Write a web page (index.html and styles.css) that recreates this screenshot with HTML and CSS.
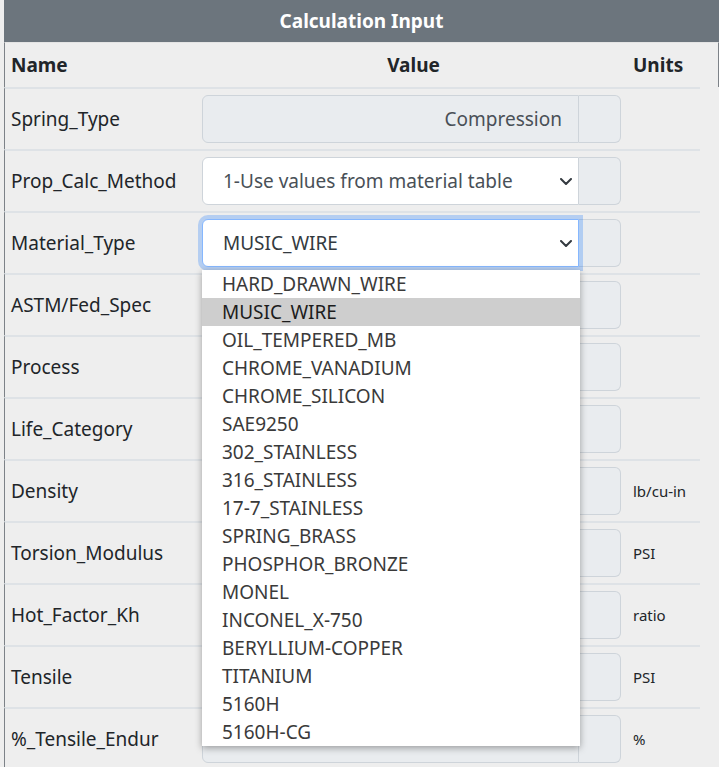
FILE: index.html
```html
<!DOCTYPE html>
<html lang="en">
<head>
<meta charset="utf-8">
<title>Calculation Input</title>
<link rel="stylesheet" href="styles.css">
</head>
<body>
<div class="panel">
  <div class="title">Calculation Input</div>
  <div class="thead">
    <div class="c-name">Name</div>
    <div class="c-value">Value</div>
    <div class="c-units">Units</div>
  </div>

  <div class="row">
    <div class="c-name">Spring_Type</div>
    <div class="ig"><div class="ctl ro">Compression</div><div class="addon"></div></div>
    <div class="c-units"></div>
  </div>
  <div class="row">
    <div class="c-name">Prop_Calc_Method</div>
    <div class="ig"><div class="ctl sel"><span>1-Use values from material table</span><svg class="chev" width="12" height="7" viewBox="0 0 12 7"><path d="M1 1 L6 6 L11 1" fill="none" stroke="#343a40" stroke-width="2" stroke-linecap="round" stroke-linejoin="round"/></svg></div><div class="addon"></div></div>
    <div class="c-units"></div>
  </div>
  <div class="row">
    <div class="c-name">Material_Type</div>
    <div class="ig"><div class="ctl sel focus"><span class="dark">MUSIC_WIRE</span><svg class="chev" width="12" height="7" viewBox="0 0 12 7"><path d="M1 1 L6 6 L11 1" fill="none" stroke="#343a40" stroke-width="2" stroke-linecap="round" stroke-linejoin="round"/></svg></div><div class="addon"></div></div>
    <div class="c-units"></div>
  </div>
  <div class="row">
    <div class="c-name">ASTM/Fed_Spec</div>
    <div class="ig"><div class="ctl ro">A228</div><div class="addon"></div></div>
    <div class="c-units"></div>
  </div>
  <div class="row">
    <div class="c-name">Process</div>
    <div class="ig"><div class="ctl ro">Cold_Coiled</div><div class="addon"></div></div>
    <div class="c-units"></div>
  </div>
  <div class="row">
    <div class="c-name">Life_Category</div>
    <div class="ig"><div class="ctl ro">Not Peened</div><div class="addon"></div></div>
    <div class="c-units"></div>
  </div>
  <div class="row">
    <div class="c-name">Density</div>
    <div class="ig"><div class="ctl ro">0.2840</div><div class="addon"></div></div>
    <div class="c-units">lb/cu-in</div>
  </div>
  <div class="row">
    <div class="c-name">Torsion_Modulus</div>
    <div class="ig"><div class="ctl ro">11500000</div><div class="addon"></div></div>
    <div class="c-units">PSI</div>
  </div>
  <div class="row">
    <div class="c-name">Hot_Factor_Kh</div>
    <div class="ig"><div class="ctl ro">1.0000</div><div class="addon"></div></div>
    <div class="c-units">ratio</div>
  </div>
  <div class="row">
    <div class="c-name">Tensile</div>
    <div class="ig"><div class="ctl ro">250000</div><div class="addon"></div></div>
    <div class="c-units">PSI</div>
  </div>
  <div class="row">
    <div class="c-name">%_Tensile_Endur</div>
    <div class="ig"><div class="ctl ro">50.00</div><div class="addon"></div></div>
    <div class="c-units">%</div>
  </div>

  <ul class="popup">
    <li>HARD_DRAWN_WIRE</li>
    <li class="on">MUSIC_WIRE</li>
    <li>OIL_TEMPERED_MB</li>
    <li>CHROME_VANADIUM</li>
    <li>CHROME_SILICON</li>
    <li>SAE9250</li>
    <li>302_STAINLESS</li>
    <li>316_STAINLESS</li>
    <li>17-7_STAINLESS</li>
    <li>SPRING_BRASS</li>
    <li>PHOSPHOR_BRONZE</li>
    <li>MONEL</li>
    <li>INCONEL_X-750</li>
    <li>BERYLLIUM-COPPER</li>
    <li>TITANIUM</li>
    <li>5160H</li>
    <li>5160H-CG</li>
  </ul>
</div>
</body>
</html>
```
FILE: styles.css
```css
html, body {
  margin: 0;
  padding: 0;
  height: 100%;
  overflow: hidden;
  background: #eeeeee;
}
body {
  font-family: "Noto Sans", "Open Sans", sans-serif;
  color: #212529;
}
.panel {
  position: relative;
  margin-left: 4px;
  width: 715px;
}
.title {
  height: 42px;
  background: #6c757d;
  color: #ffffff;
  font-weight: 700;
  font-size: 19px;
  display: flex;
  align-items: center;
  justify-content: center;
}
.thead {
  box-sizing: border-box;
  height: 45px;
  border-top: 1px solid #e4e4e4;
  border-left: 1px solid #7d8288;
  border-right: 1px solid #7d8288;
  display: grid;
  grid-template-columns: 195px 427px 1fr;
  align-items: center;
  font-weight: 700;
  font-size: 19px;
}
.thead .c-value {
  text-align: center;
}
.c-name {
  padding-left: 6px;
  font-size: 19px;
}
.c-units {
  padding-left: 6px;
}
.thead .c-name, .thead .c-units {
  font-size: 19px;
}
.row {
  box-sizing: border-box;
  width: 696px;
  height: 62px;
  border-top: 2px solid #dee2e6;
  border-left: 1px solid #7d8288;
  display: grid;
  grid-template-columns: 195px 427px 1fr;
  align-items: center;
}
.row .c-units {
  font-size: 15px;
}
.ig {
  display: flex;
  margin-left: 2px;
  width: 419px;
  height: 48px;
}
.ctl {
  box-sizing: border-box;
  flex: 0 0 377px;
  border: 1px solid #ced4da;
  border-radius: 6px 0 0 6px;
  display: flex;
  align-items: center;
  padding: 0 16px 0 20px;
  font-size: 19px;
  color: #495057;
}
.ctl.ro {
  background: #e9ecef;
  justify-content: flex-end;
}
.ctl.sel {
  background: #ffffff;
  justify-content: space-between;
  padding-right: 6px;
}
.ctl.focus {
  border-color: #86b7fe;
  box-shadow: 0 0 0 4px rgba(13, 110, 253, 0.25);
  position: relative;
  z-index: 1;
}
.dark {
  color: #343a40;
}
.chev {
  display: block;
}
.addon {
  box-sizing: border-box;
  flex: 1;
  border: 1px solid #ced4da;
  border-left: 0;
  border-radius: 0 6px 6px 0;
  background: #e9ecef;
}
.popup {
  position: absolute;
  left: 198px;
  top: 270px;
  width: 378px;
  margin: 0;
  padding: 0;
  list-style: none;
  background: #ffffff;
  box-shadow: 0 2px 7px rgba(0, 0, 0, 0.35);
  z-index: 5;
}
.popup li {
  height: 28px;
  line-height: 28px;
  padding-left: 20px;
  font-size: 19px;
  color: #3a3a3a;
  white-space: nowrap;
}
.popup li.on {
  background: #cecece;
  color: #1c1c1c;
}
```
